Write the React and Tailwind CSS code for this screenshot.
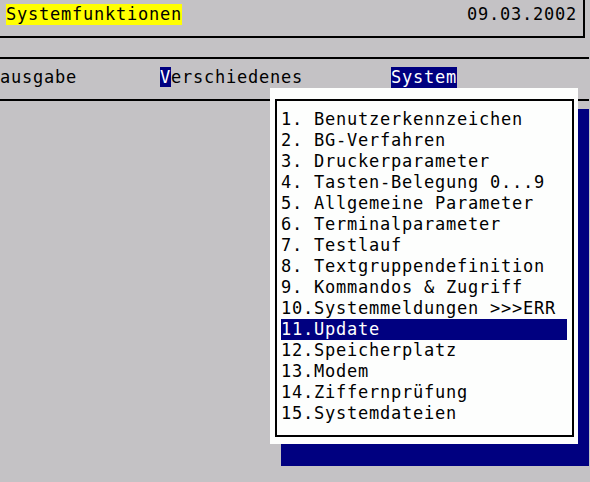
const items = [
  "1. Benutzerkennzeichen",
  "2. BG-Verfahren",
  "3. Druckerparameter",
  "4. Tasten-Belegung 0...9",
  "5. Allgemeine Parameter",
  "6. Terminalparameter",
  "7. Testlauf",
  "8. Textgruppendefinition",
  "9. Kommandos & Zugriff",
  "10.Systemmeldungen >>>ERR",
  "11.Update",
  "12.Speicherplatz",
  "13.Modem",
  "14.Ziffernprüfung",
  "15.Systemdateien",
];

const selected = 10;

export default function App() {
  return (
    <div className="relative w-[590px] h-[482px] overflow-hidden bg-[#c4c2c5] text-black font-['DejaVu_Sans_Mono',monospace] text-[17px] leading-[21px] tracking-[0.77px] whitespace-pre">
      {/* title panel */}
      <div className="flex justify-between items-start w-[585px] h-[38px] border-r-2 border-b-2 border-black">
        <span className="mt-[4px] ml-[6px] bg-[#ffff00]">Systemfunktionen</span>
        <span className="mt-[4px] mr-[6px]">09.03.2002</span>
      </div>

      {/* menu bar */}
      <div className="mt-[19px] w-[589px] h-[44px] border-t-2 border-b-2 border-black">
        <div className="flex pt-[8px]">
          <span className="w-[160px]">ausgabe</span>
          <span>
            <span className="bg-[#000080] text-white">V</span>erschiedenes
          </span>
          <span className="ml-[88px] bg-[#000080] text-white">System</span>
        </div>
      </div>

      {/* drop-down shadow */}
      <div className="absolute left-[281px] top-[109px] w-[308px] h-[357px] bg-[#000080]" />

      {/* drop-down */}
      <div className="absolute left-[270px] top-[88px] w-[308px] h-[356px] bg-[#fdfefd] pl-[5px] pt-[11px] pr-[4px] pb-[7px]">
        <div className="h-full border-2 border-black pl-[4px] pt-[8px] pr-[5px]">
          {items.map((label, i) => (
            <div
              key={label}
              className={
                i === selected
                  ? "h-[21px] bg-[#000080] text-white"
                  : "h-[21px]"
              }
            >
              {label}
            </div>
          ))}
        </div>
      </div>
    </div>
  );
}
